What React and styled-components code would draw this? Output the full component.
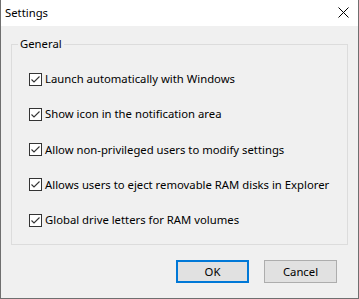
import React from 'react'
import styled, { createGlobalStyle } from 'styled-components'

const options = [
  'Launch automatically with Windows',
  'Show icon in the notification area',
  'Allow non-privileged users to modify settings',
  'Allows users to eject removable RAM disks in Explorer',
  'Global drive letters for RAM volumes',
]

const Global = createGlobalStyle`
  html, body { margin: 0; padding: 0; background: #f0f0f0; }
  * { box-sizing: border-box; }
  body { font-family: "Noto Sans", "Open Sans", sans-serif; font-size: 11.3px; color: #000; }
`

const Window = styled.div`
  width: 359px;
  height: 299px;
  display: flex;
  flex-direction: column;
  border: 1px solid #6f6f6f;
  border-top: none;
  background: #f0f0f0;
`

const TitleBar = styled.div`
  height: 26px;
  background: #fff;
  display: flex;
  align-items: center;
  justify-content: space-between;
  padding: 0 9px 1px 4px;
`

const Title = styled.span`
  font-size: 11.3px;
`

const Body = styled.div`
  flex: 1;
  display: flex;
  flex-direction: column;
  padding: 10px 10px 0 10px;
`

const Group = styled.fieldset`
  margin: 0;
  border: 1px solid #dcdcdc;
  padding: 19px 0 16px 17px;
  display: flex;
  flex-direction: column;
  gap: 19.3px;
`

const Legend = styled.legend`
  padding: 0 2px;
  margin-left: -11px;
  line-height: 16px;
`

const Row = styled.label`
  display: flex;
  align-items: center;
  gap: 3px;
  height: 16px;
  line-height: 16px;
`

const Box = styled.span`
  width: 13px;
  height: 13px;
  border: 1px solid #333;
  background: #fff;
  display: flex;
  align-items: center;
  justify-content: center;
  flex-shrink: 0;
`

const Buttons = styled.div`
  display: flex;
  justify-content: flex-end;
  gap: 15px;
  margin-top: 15px;
  padding-right: 11px;
`

const Button = styled.button`
  width: 73px;
  height: 23px;
  font-family: inherit;
  font-size: 11.3px;
  color: #000;
  background: #e1e1e1;
  border: ${p => (p.$primary ? '2px solid #0078d7' : '1px solid #adadad')};
  padding: 0;
`

const Check = () => (
  <svg width="11" height="11" viewBox="0 0 11 11">
    <polyline points="1.5,5.5 4,8 9.5,2.5" fill="none" stroke="#333" strokeWidth="1.1" />
  </svg>
)

const Close = () => (
  <svg width="11" height="11" viewBox="0 0 11 11">
    <path d="M0.5 0.5 L10.5 10.5 M10.5 0.5 L0.5 10.5" stroke="#000" strokeWidth="1" />
  </svg>
)

const App = () => {
  return (
    <>
      <Global />
      <Window>
        <TitleBar>
          <Title>Settings</Title>
          <Close />
        </TitleBar>
        <Body>
          <Group>
            <Legend>General</Legend>
            {options.map(o => (
              <Row key={o}>
                <Box><Check /></Box>
                {o}
              </Row>
            ))}
          </Group>
          <Buttons>
            <Button $primary>OK</Button>
            <Button>Cancel</Button>
          </Buttons>
        </Body>
      </Window>
    </>
  )
}

export default App
